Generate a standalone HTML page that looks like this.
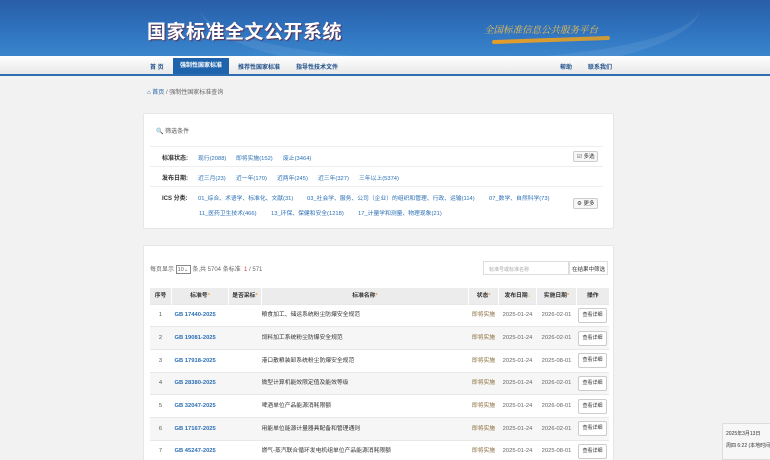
<!DOCTYPE html>
<html><head><meta charset="utf-8"><style>
*{margin:0;padding:0;box-sizing:border-box}
html,body{width:770px;height:460px;overflow:hidden}
body{background:#f2f2f2;font-family:"Liberation Sans","Noto Sans CJK SC",sans-serif;font-size:6px;color:#333;position:relative}
.hd{position:absolute;left:0;top:0;width:770px;height:56px;background:linear-gradient(180deg,#2a5ea8 0%,#2f73bf 55%,#3a86cc 100%);overflow:hidden}
.hd:before{content:"";position:absolute;left:200px;top:-60px;width:500px;height:120px;border-radius:50%;border-bottom:14px solid rgba(255,255,255,.08)}
.hd .t{position:absolute;left:147px;top:17px;font-size:19px;font-weight:bold;color:#fff;letter-spacing:0.5px;text-shadow:1px 1px 1px #5a2f4f;white-space:nowrap}
.hd .s{position:absolute;left:484px;top:22px;font-size:9.5px;color:#f3c04a;font-style:italic;font-family:"Noto Serif CJK SC",serif;white-space:nowrap}
.hd .bar{position:absolute;left:492px;top:38px;width:118px;height:4px;border-radius:2px;background:linear-gradient(90deg,#e49d2a,#c99a3a);transform:rotate(-2deg)}
.nav{position:absolute;left:0;top:56px;width:770px;height:20px;background:linear-gradient(#fff,#e8e8e8);border-bottom:2px solid #2f6db3}
.nav span{position:absolute;top:6px;font-size:6px;font-weight:bold;color:#1f4f8a;white-space:nowrap}
.nav .on{top:2px;left:173px;width:56px;height:16px;background:#1e63ac;color:#fff;text-align:center;line-height:16px}
.bc{position:absolute;left:147px;top:87px;color:#666;white-space:nowrap}
.bc b{color:#2060a8;font-weight:normal}
.panel{position:absolute;left:143px;background:#fff;border:1px solid #e6e6e6;border-radius:2px}
.f1{top:113px;width:471px;height:116px}
.f1 .ti{position:absolute;left:12px;top:12px;color:#555}
.row{position:absolute;left:6px;width:453px;border-top:1px solid #eee;height:20px}
.row .l{position:absolute;left:12px;top:6px;font-weight:bold;color:#333;white-space:nowrap}
.row .v{position:absolute;top:6px;color:#2a6fb5;white-space:nowrap;font-size:5.8px}
.btn{position:absolute;border:1px solid #ccc;border-radius:2px;background:#f7f7f7;height:11px;line-height:10px;padding:0 3px;font-size:5.5px;color:#333;white-space:nowrap}
.f2{top:245px;width:471px;height:230px}
.ctl{position:absolute;left:6px;top:18px;color:#666;white-space:nowrap}
.ctl i{display:inline-block;border:1px solid #888;width:15px;height:9px;vertical-align:middle;font-style:normal;font-size:5.5px;line-height:8px;padding-left:1px}
.srch{position:absolute;left:339px;top:15px;width:86px;height:14px;border:1px solid #ddd;color:#aaa;font-size:5px;padding:4px 0 0 5px;white-space:nowrap}
.srb{position:absolute;left:425px;top:15px;width:39px;height:14px;border:1px solid #ddd;font-size:5.5px;padding-top:3px;text-align:center;white-space:nowrap}
table{position:absolute;left:5px;top:42px;width:459px;border-collapse:collapse;table-layout:fixed}
td,th{height:22.7px;font-size:5.8px;line-height:8px;text-align:left;padding:0;white-space:nowrap;overflow:hidden;vertical-align:middle}
th{height:16px;background:#ececec;font-weight:bold;text-align:center;border-left:1px solid #fff}
tr:nth-child(odd) td{background:#f6f6f6}
tr:nth-child(even) td{background:#fff}
tr{border-bottom:1px solid #e8e8e8}
.c1{text-align:center;color:#555}
.c2{color:#2a6fb5;font-weight:bold;padding-left:3px}
.st{color:#8a6d3b;text-align:center}
.dt{color:#666;text-align:center}
.op{text-align:center}
.op span{display:inline-block;border:1px solid #ccc;border-radius:2px;background:#fff;padding:3px 3px;font-size:5px;line-height:7px;vertical-align:middle}
.o{color:#f0a030}
.tip{position:absolute;left:722px;top:423px;width:60px;height:37px;background:#f7f7f7;border:1px solid #ddd;font-size:5px;color:#333;padding:4px 3px;line-height:12px;white-space:nowrap}
</style></head><body>
<div class="hd"><div class="t">国家标准全文公开系统</div><div class="s">全国标准信息公共服务平台</div><div class="bar"></div></div>
<div class="nav"><span style="left:150px">首 页</span><span class="on">强制性国家标准</span><span style="left:238px">推荐性国家标准</span><span style="left:296px">指导性技术文件</span><span style="left:560px">帮助</span><span style="left:588px">联系我们</span></div>
<div class="bc"><b>⌂ 首页</b> / 强制性国家标准查询</div>
<div class="panel f1">
<div class="ti">🔍 筛选条件</div>
<div class="row" style="top:32px"><span class="l">标准状态:</span><span class="v" style="left:48px">现行(2088)</span><span class="v" style="left:86px">即将实施(152)</span><span class="v" style="left:133px">废止(3464)</span><span class="btn" style="left:423px;top:4px">☑ 多选</span></div>
<div class="row" style="top:52px"><span class="l">发布日期:</span><span class="v" style="left:48px">近三月(23)</span><span class="v" style="left:86px">近一年(170)</span><span class="v" style="left:127px">近两年(245)</span><span class="v" style="left:168px">近三年(327)</span><span class="v" style="left:209px">三年以上(5374)</span></div>
<div class="row" style="top:72px;height:40px"><span class="l">ICS 分类:</span><span class="v" style="left:48px">01_综合、术语学、标准化、文献(31)</span><span class="v" style="left:157px">03_社会学、服务、公司（企业）的组织和管理、行政、运输(114)</span><span class="v" style="left:339px">07_数学、自然科学(73)</span><span class="v" style="left:49px;top:21px">11_医药卫生技术(466)</span><span class="v" style="left:121px;top:21px">13_环保、保健和安全(1218)</span><span class="v" style="left:208px;top:21px">17_计量学和测量、物理现象(21)</span><span class="btn" style="left:423px;top:11px">⚙ 更多</span></div>
</div>
<div class="panel f2">
<div class="ctl">每页显示 <i>10⌄</i> 条,共 5704 条标准 &nbsp;<span style="color:#d33">1</span> / 571</div>
<div class="srch">标准号或标准名称</div><div class="srb">在结果中筛选</div>
<table>
<colgroup><col style="width:22px"><col style="width:57px"><col style="width:33px"><col style="width:207px"><col style="width:30px"><col style="width:38px"><col style="width:40px"><col style="width:32px"></colgroup>
<tr><th>序号</th><th>标准号<span class="o">*</span></th><th>是否采标<span class="o">*</span></th><th>标准名称<span class="o">*</span></th><th>状态<span class="o">*</span></th><th>发布日期<span class="o">↓</span></th><th>实施日期<span class="o">*</span></th><th>操作</th></tr>
<tr><td class="c1">1</td><td class="c2">GB 17440-2025</td><td></td><td>粮食加工、储运系统粉尘防爆安全规范</td><td class="st">即将实施</td><td class="dt">2025-01-24</td><td class="dt">2026-02-01</td><td class="op"><span>查看详细</span></td></tr>
<tr><td class="c1">2</td><td class="c2">GB 19081-2025</td><td></td><td>饲料加工系统粉尘防爆安全规范</td><td class="st">即将实施</td><td class="dt">2025-01-24</td><td class="dt">2026-02-01</td><td class="op"><span>查看详细</span></td></tr>
<tr><td class="c1">3</td><td class="c2">GB 17918-2025</td><td></td><td>港口散粮装卸系统粉尘防爆安全规范</td><td class="st">即将实施</td><td class="dt">2025-01-24</td><td class="dt">2025-08-01</td><td class="op"><span>查看详细</span></td></tr>
<tr><td class="c1">4</td><td class="c2">GB 28380-2025</td><td></td><td>微型计算机能效限定值及能效等级</td><td class="st">即将实施</td><td class="dt">2025-01-24</td><td class="dt">2026-02-01</td><td class="op"><span>查看详细</span></td></tr>
<tr><td class="c1">5</td><td class="c2">GB 32047-2025</td><td></td><td>啤酒单位产品能源消耗限额</td><td class="st">即将实施</td><td class="dt">2025-01-24</td><td class="dt">2026-08-01</td><td class="op"><span>查看详细</span></td></tr>
<tr><td class="c1">6</td><td class="c2">GB 17167-2025</td><td></td><td>用能单位能源计量器具配备和管理通则</td><td class="st">即将实施</td><td class="dt">2025-01-24</td><td class="dt">2026-02-01</td><td class="op"><span>查看详细</span></td></tr>
<tr><td class="c1">7</td><td class="c2">GB 45247-2025</td><td></td><td>燃气-蒸汽联合循环发电机组单位产品能源消耗限额</td><td class="st">即将实施</td><td class="dt">2025-01-24</td><td class="dt">2025-08-01</td><td class="op"><span>查看详细</span></td></tr>
</table>
</div>
<div class="tip">2025年3月13日<br>周四 6:22 (本地时间)</div>
</body></html>
